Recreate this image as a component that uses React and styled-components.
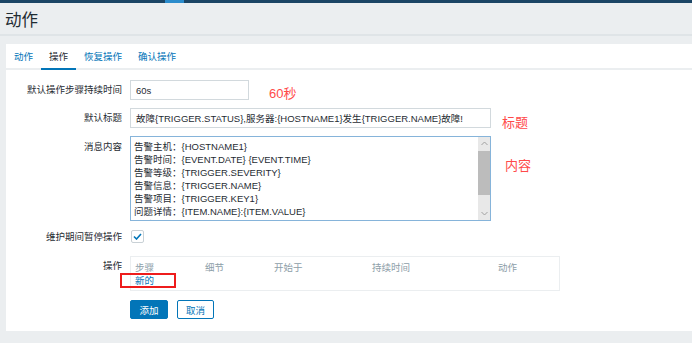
import styled, { createGlobalStyle } from "styled-components";

const GlobalStyle = createGlobalStyle`
  html, body {
    margin: 0;
    padding: 0;
    background: #ebeef0;
  }
  body {
    font-family: "Liberation Sans", "Noto Sans CJK SC", sans-serif;
    font-size: 9.5px;
    color: #1f2c33;
  }
`;

const TopBar = styled.div`
  height: 3px;
  background: #1b4565;
  display: flex;
`;

const TopMark = styled.div`
  width: 19px;
  margin-left: 165px;
  background: #2b8ccc;
`;

const Header = styled.header`
  height: 31px;
  display: flex;
  align-items: center;
  padding-left: 5px;
  border-bottom: 2px solid #dfe4e7;
  margin-bottom: 8px;
`;

const Title = styled.h1`
  margin: 0;
  font-size: 16.5px;
  font-weight: 400;
  color: #1f2c33;
`;

const Card = styled.section`
  margin-left: 6px;
  background: #fff;
  padding-bottom: 12px;
`;

const TabList = styled.nav`
  display: flex;
  height: 24px;
  border-bottom: 2px solid #ebeef0;
`;

const Tab = styled.div`
  padding: 0 8px;
  display: flex;
  align-items: center;
  color: ${(p) => (p.$active ? "#1f2c33" : "#0275b8")};
  border-bottom: 2px solid ${(p) => (p.$active ? "#0275b8" : "transparent")};
  margin-bottom: -2px;
`;

const Form = styled.div`
  display: grid;
  grid-template-columns: 116px 1fr;
  column-gap: 8px;
  row-gap: 8px;
  padding-top: 10px;
`;

const Label = styled.div`
  text-align: right;
  line-height: ${(p) => p.$lh || "20px"};
  margin-top: ${(p) => p.$top || 0};
`;

const Control = styled.div`
  display: flex;
  align-items: ${(p) => p.$align || "center"};
  margin-top: ${(p) => p.$top || 0};
`;

const Input = styled.div`
  box-sizing: border-box;
  width: ${(p) => p.$w}px;
  height: 20px;
  border: 1px solid #d2d9dd;
  padding-left: 5px;
  display: flex;
  align-items: center;
  white-space: nowrap;
  overflow: hidden;
`;

const Note = styled.span`
  color: #ff4a4a;
  font-size: 13px;
  line-height: 10px;
  margin-left: ${(p) => p.$gap}px;
  margin-top: ${(p) => p.$top || 0}px;
  align-self: flex-start;
`;

const TextArea = styled.div`
  box-sizing: border-box;
  width: 361px;
  height: 85px;
  border: 1px solid #86b4da;
  display: flex;
`;

const TextBody = styled.div`
  flex: 1;
  overflow: hidden;
  padding: 3px 0 0 3px;
  line-height: 13px;
  white-space: nowrap;
`;

const Scrollbar = styled.div`
  width: 12px;
  background: #e8e8e8;
  display: flex;
  flex-direction: column;
`;

const ScrollArrow = styled.div`
  height: 13px;
  display: flex;
  align-items: center;
  justify-content: center;
`;

const ScrollThumb = styled.div`
  margin-top: 1px;
  height: 44px;
  background: #bcbcbc;
`;

const ScrollTrack = styled.div`
  flex: 1;
`;

const Check = styled.div`
  box-sizing: border-box;
  width: 13px;
  height: 13px;
  margin-left: 1px;
  margin-top: -2px;
  border: 1px solid #c9d1d6;
  border-radius: 2px;
  display: flex;
  align-items: center;
  justify-content: center;
`;

const Table = styled.div`
  position: relative;
  box-sizing: border-box;
  width: 430px;
  height: 35px;
  border: 1px solid #ebeef0;
  padding-top: 4px;
`;

const TableRow = styled.div`
  display: grid;
  grid-template-columns: 70px 69px 98px 126px 1fr;
  line-height: 13px;
`;

const HeadCell = styled.div`
  padding-left: 4px;
  color: #8d9ea8;
`;

const LinkCell = styled.div`
  padding-left: 4px;
  color: #0275b8;
`;

const Highlight = styled.div`
  position: absolute;
  left: -11px;
  top: 16px;
  width: 56px;
  height: 15px;
  box-sizing: border-box;
  border: 2px solid #ee1c1c;
`;

const Buttons = styled.div`
  display: flex;
  gap: 9px;
  margin-top: 1px;
`;

const Button = styled.button`
  box-sizing: border-box;
  height: 19px;
  width: ${(p) => p.$w}px;
  padding: 0;
  font: inherit;
  border-radius: 2px;
  border: 1px solid #0275b8;
  background: ${(p) => (p.$primary ? "#0275b8" : "#fff")};
  color: ${(p) => (p.$primary ? "#fff" : "#0275b8")};
`;

const lines = [
  "告警主机：{HOSTNAME1}",
  "告警时间：{EVENT.DATE} {EVENT.TIME}",
  "告警等级：{TRIGGER.SEVERITY}",
  "告警信息：{TRIGGER.NAME}",
  "告警项目：{TRIGGER.KEY1}",
  "问题详情：{ITEM.NAME}:{ITEM.VALUE}",
  "当前状态：{TRIGGER.STATUS}:{ITEM.VALUE1}",
];

const Chevron = ({ up }) => (
  <svg width="7" height="5" viewBox="0 0 7 5">
    <polyline
      points={up ? "0.5,4 3.5,1 6.5,4" : "0.5,1 3.5,4 6.5,1"}
      fill="none"
      stroke="#a0a0a0"
      strokeWidth="1"
    />
  </svg>
);

export default function App() {
  return (
    <>
      <GlobalStyle />
      <TopBar>
        <TopMark />
      </TopBar>
      <Header>
        <Title>动作</Title>
      </Header>
      <Card>
        <TabList>
          <Tab>动作</Tab>
          <Tab $active>操作</Tab>
          <Tab>恢复操作</Tab>
          <Tab>确认操作</Tab>
        </TabList>
        <Form>
          <Label>默认操作步骤持续时间</Label>
          <Control>
            <Input $w={119}>60s</Input>
            <Note $gap={20} $top={9}>60秒</Note>
          </Control>

          <Label>默认标题</Label>
          <Control>
            <Input $w={361}>故障{"{TRIGGER.STATUS}"},服务器:{"{HOSTNAME1}"}发生{"{TRIGGER.NAME}"}故障!</Input>
            <Note $gap={11} $top={10}>标题</Note>
          </Control>

          <Label $lh="13px" $top="4px">消息内容</Label>
          <Control $align="flex-start">
            <TextArea>
              <TextBody>
                {lines.map((l) => (
                  <div key={l}>{l}</div>
                ))}
              </TextBody>
              <Scrollbar>
                <ScrollArrow>
                  <Chevron up />
                </ScrollArrow>
                <ScrollThumb />
                <ScrollTrack />
                <ScrollArrow>
                  <Chevron />
                </ScrollArrow>
              </Scrollbar>
            </TextArea>
            <Note $gap={14} $top={25}>内容</Note>
          </Control>

          <Label $lh="16px">维护期间暂停操作</Label>
          <Control>
            <Check>
              <svg width="9" height="7" viewBox="0 0 9 7">
                <polyline points="1,3.5 3.5,6 8,1" fill="none" stroke="#0275b8" strokeWidth="1.6" />
              </svg>
            </Check>
          </Control>

          <Label $lh="13px" $top="6px">操作</Label>
          <Control $top="3px">
            <Table>
              <TableRow>
                <HeadCell>步骤</HeadCell>
                <HeadCell>细节</HeadCell>
                <HeadCell>开始于</HeadCell>
                <HeadCell>持续时间</HeadCell>
                <HeadCell>动作</HeadCell>
              </TableRow>
              <TableRow>
                <LinkCell>新的</LinkCell>
              </TableRow>
              <Highlight />
            </Table>
          </Control>

          <div />
          <Buttons>
            <Button $primary $w={38}>添加</Button>
            <Button $w={37}>取消</Button>
          </Buttons>
        </Form>
      </Card>
    </>
  );
}
